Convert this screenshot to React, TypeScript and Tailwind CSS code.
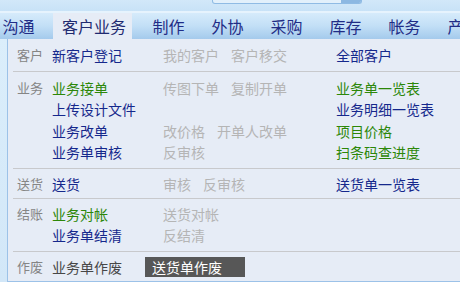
import React from "react";

const BLUE = "text-[#15288c]";
const GREEN = "text-[#2c8708]";
const GRAY = "text-[#b5b5b5]";

type Cell = { t: string; c: string };

function Row({ label, c1, c2, c3 }: { label?: string; c1?: Cell; c2?: Cell[]; c3?: Cell }) {
  return (
    <div className="grid grid-cols-[35px_111px_173px_1fr] h-[21.5px] items-center whitespace-nowrap">
      <span className="text-[13px] text-[#858585] leading-none">{label ?? ""}</span>
      <span className={`text-[14px] leading-none ${c1?.c ?? ""}`}>{c1?.t ?? ""}</span>
      <span className="flex gap-[12px] text-[14px] leading-none">
        {(c2 ?? []).map((x, i) => (
          <span key={i} className={x.c}>
            {x.t}
          </span>
        ))}
      </span>
      <span className={`text-[14px] leading-none ${c3?.c ?? ""}`}>{c3?.t ?? ""}</span>
    </div>
  );
}

function Sep() {
  return <div className="ml-[5px] h-px bg-[#c8c9cc]" />;
}

export default function App() {
  const tabs = ["制作", "外协", "采购", "库存", "帐务", "产品"];
  return (
    <div
      className="w-[460px] h-[282px] overflow-hidden flex flex-col bg-[#d3e8f9]"
      style={{ fontFamily: '"Noto Sans CJK SC", "Noto Sans", sans-serif' }}
    >
      {/* top strip */}
      <div className="h-[11px] shrink-0 flex bg-gradient-to-b from-[#d2e8f9] to-[#c8e2f7]">
        <div className="ml-[212px] w-[150px] h-[4px] flex rounded-b-[3px] border border-t-0 border-[#8fbbe4] bg-[#e2f0fb] overflow-hidden">
          <div className="flex-1" />
          <div className="w-[20px] bg-[#8cb8e2]" />
        </div>
      </div>
      <div className="h-[2px] shrink-0 bg-[#e6f3fd]" />
      {/* tab row */}
      <div className="h-[26px] shrink-0 flex overflow-hidden whitespace-nowrap bg-gradient-to-b from-[#d6ebfb] via-[#c2dff6] to-[#a4caec] text-[16px] text-[#1f2c86]">
        <div className="-ml-[11px] w-[59px] shrink-0 flex items-center justify-center">沟通</div>
        <div className="ml-[5px] mr-[7px] w-[79px] shrink-0 flex items-center pl-[9px] bg-[#e6ecf6] text-[#1f2a70]">
          客户业务
        </div>
        {tabs.map((t) => (
          <div key={t} className="w-[59px] shrink-0 flex items-center justify-center">
            {t}
          </div>
        ))}
      </div>
      {/* body */}
      <div className="flex-1 flex">
        <div className="w-[7px] shrink-0 bg-gradient-to-b from-[#dbeefb] to-[#d2e7f8]" />
        <div className="flex-1 bg-[#e6ecf6] border-l border-b border-[#9cc2e8] flex flex-col">
          <div className="h-[32px] pl-[9px] pt-[5px]">
            <Row
              label="客户"
              c1={{ t: "新客户登记", c: BLUE }}
              c2={[
                { t: "我的客户", c: GRAY },
                { t: "客户移交", c: GRAY },
              ]}
              c3={{ t: "全部客户", c: BLUE }}
            />
          </div>
          <Sep />
          <div className="h-[96px] pl-[9px] pt-[5px]">
            <Row
              label="业务"
              c1={{ t: "业务接单", c: GREEN }}
              c2={[
                { t: "传图下单", c: GRAY },
                { t: "复制开单", c: GRAY },
              ]}
              c3={{ t: "业务单一览表", c: GREEN }}
            />
            <Row c1={{ t: "上传设计文件", c: BLUE }} c3={{ t: "业务明细一览表", c: BLUE }} />
            <Row
              c1={{ t: "业务改单", c: BLUE }}
              c2={[
                { t: "改价格", c: GRAY },
                { t: "开单人改单", c: GRAY },
              ]}
              c3={{ t: "项目价格", c: GREEN }}
            />
            <Row
              c1={{ t: "业务单审核", c: BLUE }}
              c2={[{ t: "反审核", c: GRAY }]}
              c3={{ t: "扫条码查进度", c: GREEN }}
            />
          </div>
          <Sep />
          <div className="h-[29px] pl-[9px] pt-[4px]">
            <Row
              label="送货"
              c1={{ t: "送货", c: BLUE }}
              c2={[
                { t: "审核", c: GRAY },
                { t: "反审核", c: GRAY },
              ]}
              c3={{ t: "送货单一览表", c: BLUE }}
            />
          </div>
          <Sep />
          <div className="h-[52px] pl-[9px] pt-[4px]">
            <Row label="结账" c1={{ t: "业务对帐", c: GREEN }} c2={[{ t: "送货对帐", c: GRAY }]} />
            <Row c1={{ t: "业务单结清", c: BLUE }} c2={[{ t: "反结清", c: GRAY }]} />
          </div>
          <Sep />
          <div className="flex-1 pl-[9px] flex items-center whitespace-nowrap">
            <span className="w-[35px] text-[13px] text-[#858585] leading-none">作废</span>
            <span className="w-[93px] text-[14px] leading-none text-[#474747]">业务单作废</span>
            <span className="w-[100px] h-[20px] flex items-center pl-[7px] bg-[#575757] text-white text-[14px] leading-none">
              送货单作废
            </span>
          </div>
        </div>
      </div>
    </div>
  );
}
